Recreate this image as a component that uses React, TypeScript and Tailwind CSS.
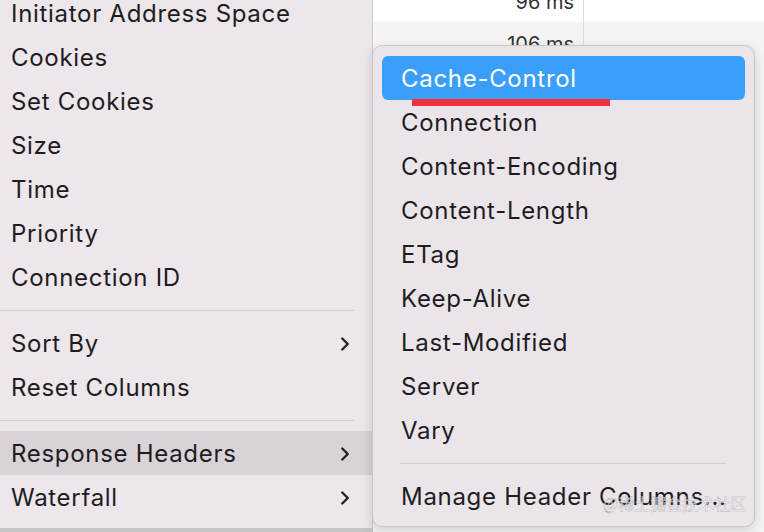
import { ChevronRight } from 'lucide-react';

const font = { fontFamily: 'Inter, "Noto Sans", sans-serif' };

const leftGroups = [
  ['Initiator Address Space', 'Cookies', 'Set Cookies', 'Size', 'Time', 'Priority', 'Connection ID'],
  ['Sort By>', 'Reset Columns'],
  ['Response Headers>', 'Waterfall>'],
];

const headers = [
  'Cache-Control',
  'Connection',
  'Content-Encoding',
  'Content-Length',
  'ETag',
  'Keep-Alive',
  'Last-Modified',
  'Server',
  'Vary',
];

function Separator({ w }: { w: string }) {
  return (
    <div className="h-[22px] flex items-center">
      <div className={`h-px bg-[#d4cdd1] ${w}`} />
    </div>
  );
}

export default function App() {
  return (
    <div className="relative w-[764px] h-[532px] overflow-hidden bg-[#c9c4c7] text-[#1d1d1f]" style={font}>
      <div className="flex h-full">
        {/* Context menu (main) */}
        <div className="w-[372px] h-[528px] bg-[#ede6ea] border-r border-[#cfc8cc] flex flex-col -mt-[9px] pb-[9px] box-content">
          {leftGroups.map((group, gi) => (
            <div key={gi}>
              {gi > 0 && <Separator w="w-[354px]" />}
              {group.map((raw) => {
                const sub = raw.endsWith('>');
                const label = sub ? raw.slice(0, -1) : raw;
                const active = label === 'Response Headers';
                return (
                  <div
                    key={label}
                    className={`h-[44px] flex items-center pl-[11px] pr-[16px] pt-[2px] text-[24px] tracking-[0.7px] ${
                      active ? 'bg-[#d9d2d7]' : ''
                    }`}
                  >
                    <span className="flex-1">{label}</span>
                    {sub && <ChevronRight size={22} strokeWidth={2.6} className="text-[#222]" />}
                  </div>
                );
              })}
            </div>
          ))}
        </div>

        {/* Network table behind */}
        <div className="flex-1 flex flex-col bg-white">
          <div className="h-[22px] flex">
            <div className="w-[211px] border-r border-[#dcdcdc] flex items-center justify-end pr-[9px] text-[20px] text-[#333] leading-none -mt-[18px]">
              96 ms
            </div>
          </div>
          <div className="flex-1 flex bg-[#f4f4f4]">
            <div className="w-[211px] border-r border-[#dcdcdc] h-[32px] flex items-end justify-end pr-[9px] text-[20px] text-[#333] leading-none">
              106 ms
            </div>
          </div>
        </div>
      </div>

      {/* Submenu */}
      <div className="absolute left-[372px] top-[45px] w-[383px] h-[482px] rounded-[10px] bg-[#ebe5ea] border border-[#cbc5c9] shadow-[0_4px_12px_rgba(0,0,0,0.15)] px-[9px] pt-[10px]">
        {headers.map((h) => {
          const active = h === 'Cache-Control';
          return (
            <div
              key={h}
              className={`relative h-[44px] flex items-center pl-[19px] pt-[2px] text-[24px] tracking-[0.7px] rounded-[6px] ${
                active ? 'bg-[#3a9efb] text-white' : ''
              }`}
            >
              {h}
              {active && <div className="absolute left-[30px] top-[43px] w-[198px] h-[7px] bg-[#f2313c]" />}
            </div>
          );
        })}
        <div className="h-[22px] flex items-center pl-[18px]">
          <div className="h-px w-[326px] bg-[#d4cdd1]" />
        </div>
        <div className="h-[44px] flex items-center pl-[19px] pt-[2px] text-[24px] tracking-[0.7px] whitespace-nowrap">
          Manage Header Columns...
        </div>
      </div>

      {/* Watermark */}
      <div
        className="absolute left-[603px] top-[495px] text-[16px] text-white/70 leading-none"
        style={{ fontFamily: '"Noto Sans CJK SC", sans-serif', WebkitTextStroke: '0.4px rgba(120,120,120,0.6)' }}
      >
        @稀土掘金技术社区
      </div>
    </div>
  );
}
